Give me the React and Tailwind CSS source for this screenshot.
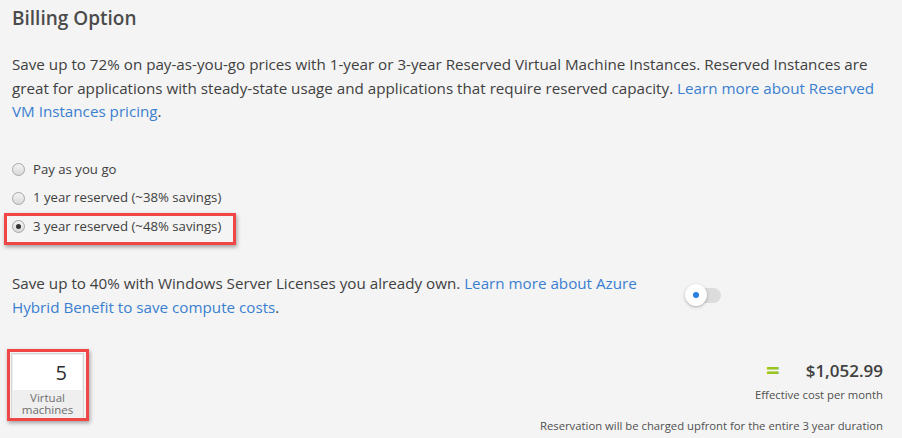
import React, { useState } from 'react'

// Plain radio drawn like the old Windows control
const Radio = ({ checked }) => (
  <span className="w-[13px] h-[13px] rounded-full border border-[#a6a6a6] bg-gradient-to-b from-[#f4f4f4] to-[#d9d9d9] flex items-center justify-center shrink-0">
    {checked && <span className="w-[5px] h-[5px] rounded-full bg-[#333]" />}
  </span>
)

const Highlight = ({ className = '' }) => (
  <span className={`absolute border-[3px] border-[#f04646] shadow-[1px_2px_4px_rgba(0,0,0,0.35)] pointer-events-none ${className}`} />
)

export default function App(){
  const [option, setOption] = useState('3y')
  const [hybrid, setHybrid] = useState(false)

  const options = [
    { id: 'payg', label: 'Pay as you go' },
    { id: '1y', label: '1 year reserved (~38% savings)' },
    { id: '3y', label: '3 year reserved (~48% savings)' },
  ]

  return (
    <div className="w-[902px] h-[438px] overflow-hidden bg-[#f4f4f4] text-[#404040] font-['Open_Sans',sans-serif]">
      <div className="pl-[12px] pr-[19px] pt-[4px]">
        <h2 className="text-[19px] leading-[28px] font-semibold text-[#4b4b4b]">Billing Option</h2>

        <p className="mt-[21px] text-[15.2px] leading-[23.5px] pr-[6px]">
          Save up to 72% on pay-as-you-go prices with 1-year or 3-year Reserved Virtual Machine Instances. Reserved Instances are great for applications with steady-state usage and applications that require reserved capacity.{' '}
          <a className="text-[#3a7fd0]">Learn more about Reserved VM Instances pricing</a>.
        </p>

        <div className="mt-[32px] flex flex-col">
          {options.map(o => (
            <label key={o.id} className="relative h-[28.5px] flex items-center gap-[8px] text-[13.2px] cursor-pointer" onClick={() => setOption(o.id)}>
              <Radio checked={option === o.id} />
              <span>{o.label}</span>
              {o.id === '3y' && <Highlight className="-left-[8px] top-[0px] w-[232px] h-[32px]" />}
            </label>
          ))}
        </div>

        <div className="mt-[30px] flex items-center">
          <p className="w-[650px] text-[15.2px] leading-[24px]">
            Save up to 40% with Windows Server Licenses you already own.{' '}
            <a className="text-[#3a7fd0]">Learn more about Azure Hybrid Benefit to save compute costs</a>.
          </p>
          <button className="relative ml-[23px] w-[36px] h-[24px] flex items-center" onClick={() => setHybrid(!hybrid)}>
            <span className="absolute left-[7px] w-[29px] h-[15px] rounded-full bg-[#dcdcdc]" />
            <span className="absolute left-0 w-[22px] h-[22px] rounded-full bg-white shadow-[0_1px_3px_rgba(0,0,0,0.3)] flex items-center justify-center">
              <span className="w-[6px] h-[6px] rounded-full bg-[#2b7de0]" />
            </span>
          </button>
        </div>

        <div className="mt-[30px] flex justify-between items-start">
          <div className="relative ml-[-1px] mt-[4px] w-[73px] border border-[#d6d6d6] bg-[#efefef] p-[1px]">
            <div className="h-[35px] bg-white text-right pr-[15px] text-[20px] leading-[35px] text-[#2e2e2e]">5</div>
            <div className="text-center text-[11.5px] leading-[12px] text-[#6e6e6e] pt-[2px] pb-[3px]">Virtual<br />machines</div>
            <Highlight className="-left-[5px] -top-[5px] w-[82px] h-[72px]" />
          </div>

          <div className="flex flex-col items-end text-[11.3px] text-[#505050]">
            <div className="flex items-center h-[28px] mt-[8px]">
              <span className="text-[#9ac41c] text-[24px] font-bold leading-none mr-[26px] mt-[-3px]">=</span>
              <span className="text-[17px] font-semibold text-[#404040]">$1,052.99</span>
            </div>
            <div className="leading-[16px] mt-[2px]">Effective cost per month</div>
            <div className="leading-[16px] mt-[15px]">Reservation will be charged upfront for the entire 3 year duration</div>
          </div>
        </div>
      </div>
    </div>
  )
}
